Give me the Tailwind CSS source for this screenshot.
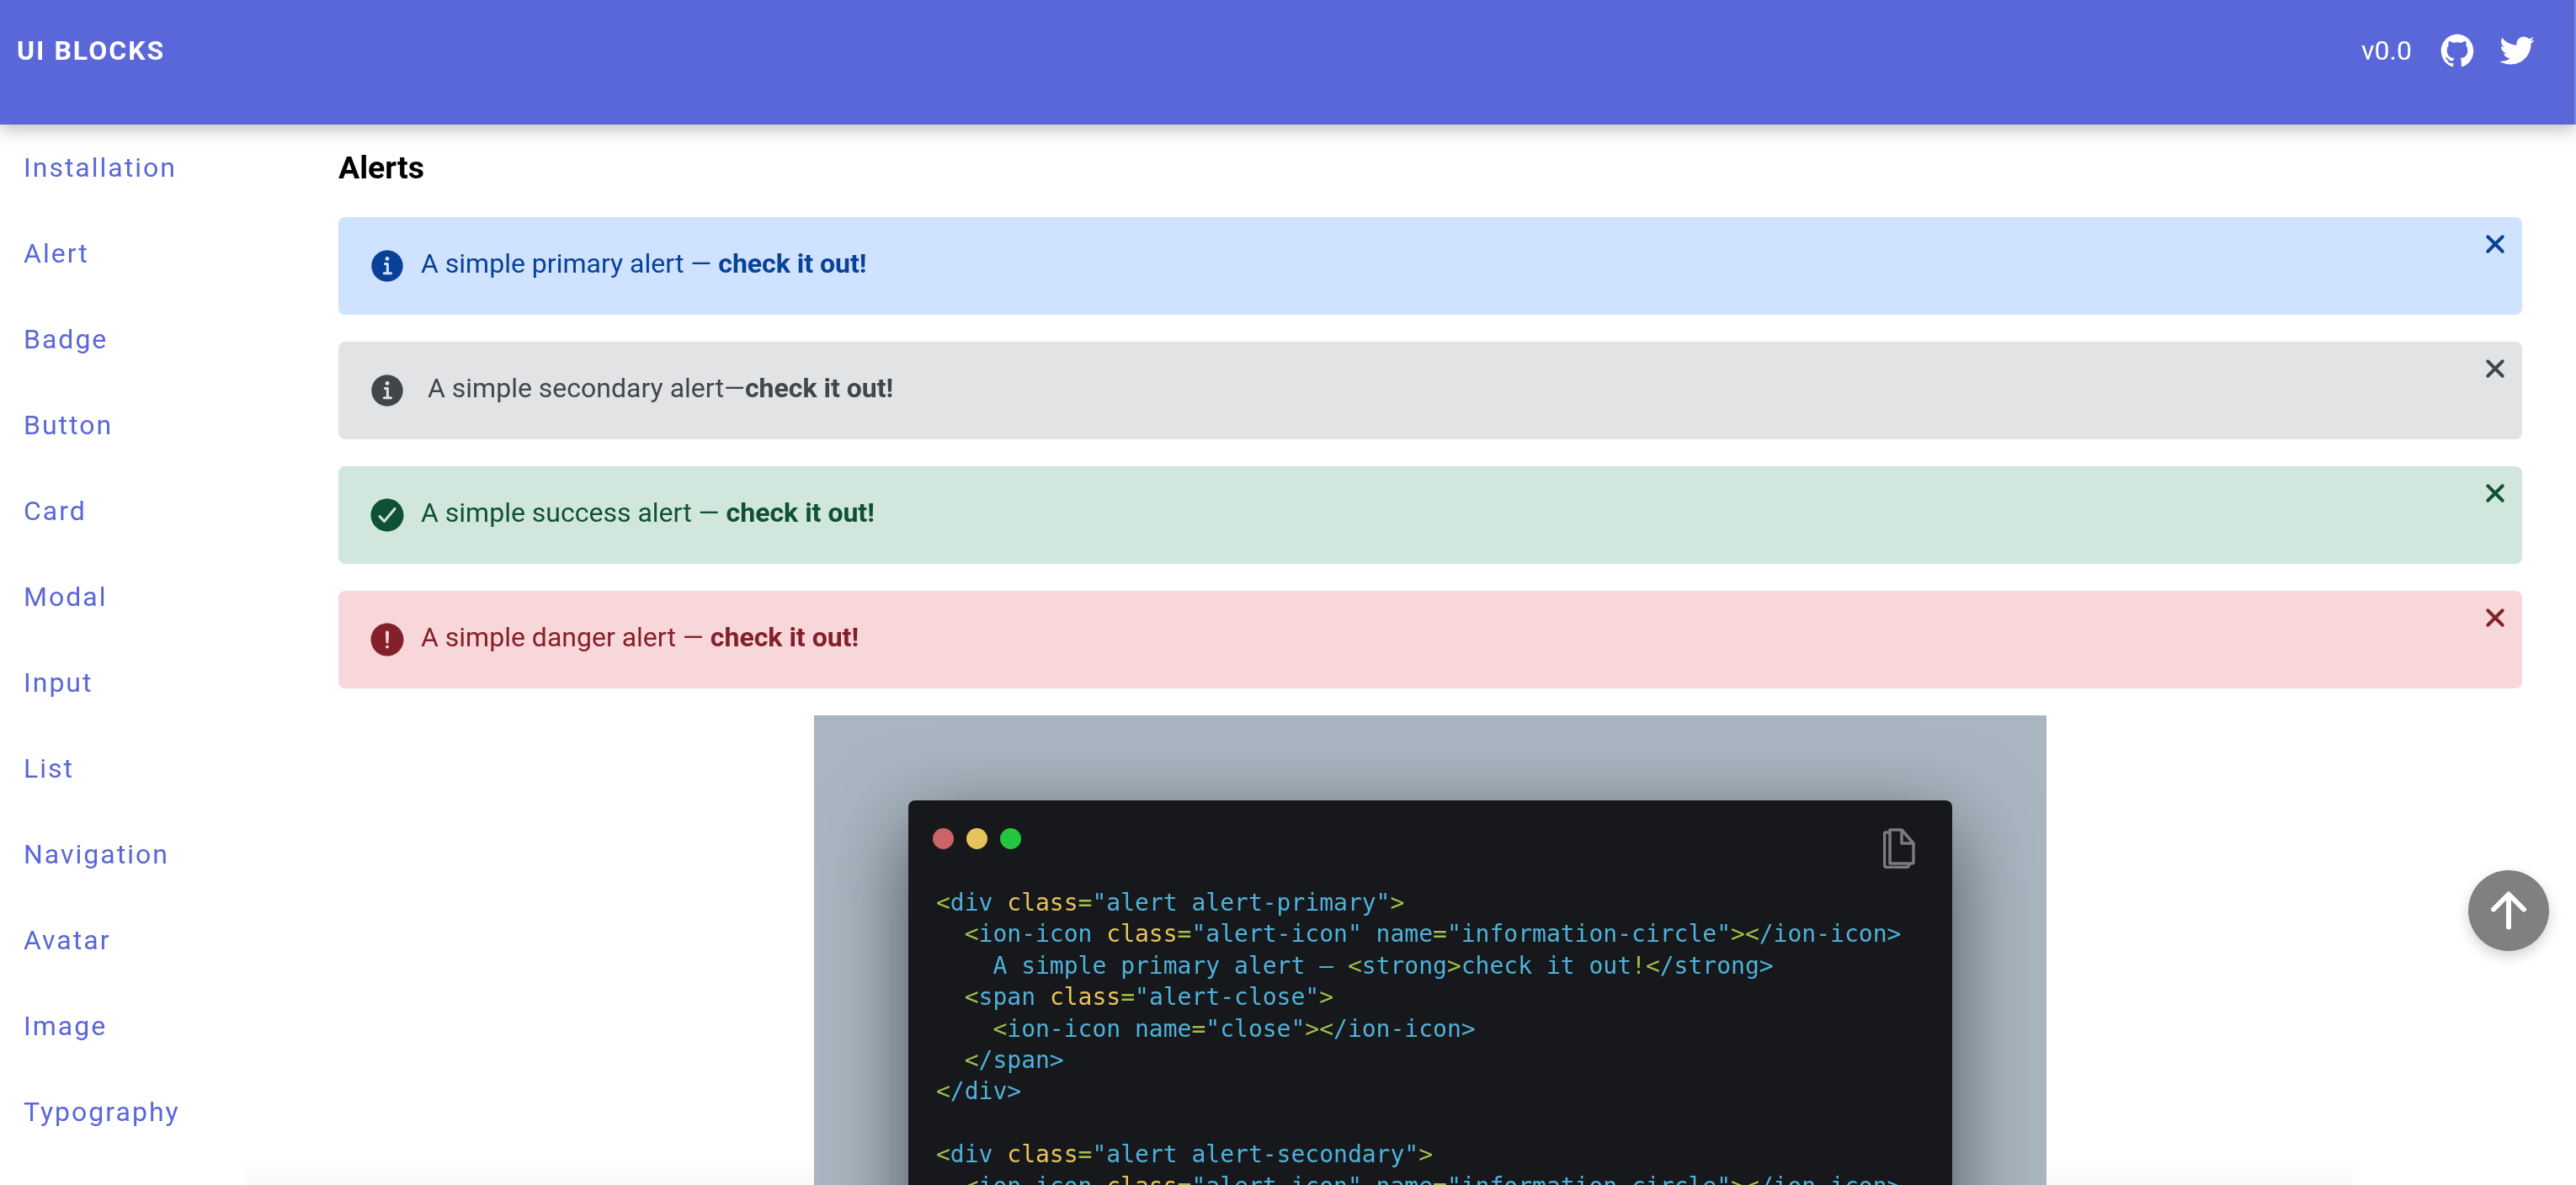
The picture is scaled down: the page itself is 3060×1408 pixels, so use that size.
<!DOCTYPE html>
<html lang="en">
<head>
    <meta charset="UTF-8">
    <meta name="viewport" content="width=device-width, initial-scale=1.0">
    <title>UI Blocks</title>
    <script src="https://cdn.jsdelivr.net/npm/@tailwindcss/browser@4"></script>
</head>
<body class="h-screen overflow-hidden bg-white text-black font-['Roboto',sans-serif]">
    
    <div class="fixed bottom-0 left-[290px] w-[2505px] h-[31px] rounded-t-[300px/31px] bg-gradient-to-b from-[#fefefe] to-[#fafafa]"></div>

    <header class="relative z-10 h-[148px] bg-[#5a67d8] border-r-2 border-[#7c87e0] pl-[20px] pr-[46px] pt-[41px] flex justify-between items-start text-white shadow-[0_5px_20px_rgba(0,0,0,0.27)]">
        <h1 class="text-[32px] leading-[38px] font-bold tracking-[2px]">UI BLOCKS</h1>
        <div class="flex items-center h-[38px]">
            <span class="text-[32px] mr-[32px]">v0.0</span>
            <svg class="w-[44px] h-[44px] mr-[27px]" viewBox="0 0 512 512" fill="currentColor"><path d="M256 32C132.3 32 32 134.9 32 261.7c0 101.5 64.2 187.5 153.2 217.9a17.56 17.56 0 003.8.4c8.3 0 11.5-6.1 11.5-11.4 0-5.5-.2-19.9-.3-39.1a102.4 102.4 0 01-22.6 2.7c-43.1 0-52.9-33.5-52.9-33.5-10.2-26.5-24.9-33.6-24.9-33.6-19.5-13.7-.1-14.1 1.4-14.1h.1c22.5 2 34.3 23.8 34.3 23.8 11.2 19.6 26.2 25.1 39.6 25.1a63 63 0 0025.6-6c2-14.8 7.8-24.9 14.2-30.7-49.7-5.8-102-25.5-102-113.5 0-25.1 8.7-45.6 23-61.6-2.3-5.8-10-29.2 2.2-60.8a18.64 18.64 0 015-.5c8.1 0 26.4 3.1 56.6 24.1a208.21 208.21 0 01112.2 0c30.2-21 48.5-24.1 56.6-24.1a18.64 18.64 0 015 .5c12.2 31.6 4.5 55 2.2 60.8 14.3 16.1 23 36.6 23 61.6 0 88.2-52.4 107.6-102.3 113.3 8 7.1 15.2 21.1 15.2 42.5 0 30.7-.3 55.5-.3 63 0 5.4 3.1 11.5 11.4 11.5a19.35 19.35 0 004-.4C415.9 449.2 480 363.1 480 261.7 480 134.9 379.7 32 256 32z"/></svg>
            <svg class="w-[44px] h-[44px]" viewBox="0 0 512 512" fill="currentColor"><path d="M496 109.5a201.8 201.8 0 01-56.55 15.3 97.51 97.51 0 0043.33-53.6 197.74 197.74 0 01-62.56 23.5A99.14 99.14 0 00348.31 64c-54.42 0-98.46 43.4-98.46 96.9a93.21 93.21 0 002.54 22.1 280.7 280.7 0 01-203-101.3A95.69 95.69 0 0036 130.4c0 33.6 17.53 63.3 44 80.7A97.5 97.5 0 0135.22 199v1.2c0 47 34 86.1 79 95a100.76 100.76 0 01-25.94 3.4 94.38 94.38 0 01-18.51-1.8c12.51 38.5 48.92 66.5 92.05 67.3A199.59 199.59 0 0139.5 405.6a203 203 0 01-23.5-1.4A278.68 278.68 0 00166.74 448c181.36 0 280.44-147.7 280.44-275.8 0-4.2-.11-8.4-.31-12.5A198.48 198.48 0 00496 109.5z"/></svg>
        </div>
    </header>

    <div class="relative flex">
        <!-- sidebar -->
        <nav class="w-[402px] shrink-0 pl-[28px] text-[32px] leading-[102px] tracking-[2px] text-[#5a67d8]">
            <ul>
                <li>Installation</li>
                <li>Alert</li>
                <li>Badge</li>
                <li>Button</li>
                <li>Card</li>
                <li>Modal</li>
                <li>Input</li>
                <li>List</li>
                <li>Navigation</li>
                <li>Avatar</li>
                <li>Image</li>
                <li>Typography</li>
            </ul>
        </nav>

        <main class="w-[2594px] shrink-0">
            <h2 class="text-[37.5px] leading-[48px] font-bold pt-[27px] mb-[35px]">Alerts</h2>

            <div class="flex flex-col gap-[32px]">
                <div class="relative h-[116px] rounded-lg bg-[#cfe2ff] text-[#084298] pl-[34px] flex items-center text-[32px]">
                    <svg class="w-[48px] h-[48px] shrink-0" viewBox="0 0 512 512" fill="currentColor"><path d="M256 56C145.72 56 56 145.72 56 256s89.72 200 200 200 200-89.72 200-200S366.28 56 256 56zm0 82a26 26 0 11-26 26 26 26 0 0126-26zm48 226h-88a16 16 0 010-32h28v-88h-16a16 16 0 010-32h32a16 16 0 0116 16v104h28a16 16 0 010 32z"/></svg>
                    <span class="ml-[16px] mb-[7px]">A simple primary alert — <strong class="font-bold">check it out!</strong></span>
                    <svg class="absolute top-[12px] right-[12px] w-[40px] h-[40px]" viewBox="0 0 512 512" fill="none" stroke="currentColor" stroke-width="50" stroke-linecap="round"><path d="M368 368L144 144M368 144L144 368"/></svg>
                </div>
                <div class="relative h-[116px] rounded-lg bg-[#e2e3e5] text-[#41464b] pl-[34px] flex items-center text-[32px]">
                    <svg class="w-[48px] h-[48px] shrink-0" viewBox="0 0 512 512" fill="currentColor"><path d="M256 56C145.72 56 56 145.72 56 256s89.72 200 200 200 200-89.72 200-200S366.28 56 256 56zm0 82a26 26 0 11-26 26 26 26 0 0126-26zm48 226h-88a16 16 0 010-32h28v-88h-16a16 16 0 010-32h32a16 16 0 0116 16v104h28a16 16 0 010 32z"/></svg>
                    <span class="ml-[24px] mb-[7px]">A simple secondary alert—<strong class="font-bold">check it out!</strong></span>
                    <svg class="absolute top-[12px] right-[12px] w-[40px] h-[40px]" viewBox="0 0 512 512" fill="none" stroke="currentColor" stroke-width="50" stroke-linecap="round"><path d="M368 368L144 144M368 144L144 368"/></svg>
                </div>
                <div class="relative h-[116px] rounded-lg bg-[#d1e7dd] text-[#0f5132] pl-[34px] flex items-center text-[32px]">
                    <svg class="w-[48px] h-[48px] shrink-0" viewBox="0 0 512 512" fill="currentColor"><path d="M256 48C141.31 48 48 141.31 48 256s93.31 208 208 208 208-93.31 208-208S370.69 48 256 48zm108.25 138.29l-134.4 160a16 16 0 01-12 5.71h-.27a16 16 0 01-11.89-5.3l-57.6-64a16 16 0 1123.78-21.4l45.29 50.32 122.59-145.91a16 16 0 0124.5 20.58z"/></svg>
                    <span class="ml-[16px] mb-[7px]">A simple success alert — <strong class="font-bold">check it out!</strong></span>
                    <svg class="absolute top-[12px] right-[12px] w-[40px] h-[40px]" viewBox="0 0 512 512" fill="none" stroke="currentColor" stroke-width="50" stroke-linecap="round"><path d="M368 368L144 144M368 144L144 368"/></svg>
                </div>
                <div class="relative h-[116px] rounded-lg bg-[#f8d7da] text-[#842029] pl-[34px] flex items-center text-[32px]">
                    <svg class="w-[48px] h-[48px] shrink-0" viewBox="0 0 512 512" fill="currentColor"><path d="M256 48C141.31 48 48 141.31 48 256s93.31 208 208 208 208-93.31 208-208S370.69 48 256 48zm0 319.91a20 20 0 1120-20 20 20 0 01-20 20zm21.72-201.15l-5.74 122a16 16 0 01-32 0l-5.74-121.94v-.05a21.74 21.74 0 1143.44 0z"/></svg>
                    <span class="ml-[16px] mb-[7px]">A simple danger alert — <strong class="font-bold">check it out!</strong></span>
                    <svg class="absolute top-[12px] right-[12px] w-[40px] h-[40px]" viewBox="0 0 512 512" fill="none" stroke="currentColor" stroke-width="50" stroke-linecap="round"><path d="M368 368L144 144M368 144L144 368"/></svg>
                </div>
            </div>

            <!-- code snippet picture -->
            <div class="w-[1464px] ml-[565px] mt-[32px] h-[900px] overflow-hidden bg-[#a9b6c1] pt-[101px] pl-[112px]">
                <div class="relative w-[1240px] h-[800px] rounded-lg bg-[#16181b] pt-[33px] pl-[33px] shadow-[0_30px_100px_rgba(0,0,0,0.55)]">
                    <div class="flex gap-[15px] -ml-[4px]">
                        <span class="w-[25px] h-[25px] rounded-full bg-[#cb6368]"></span>
                        <span class="w-[25px] h-[25px] rounded-full bg-[#e6c35c]"></span>
                        <span class="w-[25px] h-[25px] rounded-full bg-[#25c63f]"></span>
                    </div>
                    <svg class="absolute top-[33px] right-[44px] w-[38px] h-[48px]" viewBox="0 0 38 48" fill="none" stroke="#7b7b7b" stroke-width="3.500" stroke-linejoin="round"><path d="M8 2h14l14 16v22a2 2 0 01-2 2H8z"/><path d="M22 2v16h14"/><path d="M8 5H3a1.500 1.500 0 00-1.500 1.500V44a2.500 2.500 0 002.500 2.500h24a2.500 2.500 0 002.500-2.500v-2"/></svg>
                    <pre class="mt-[45px] font-['DejaVu_Sans_Mono',monospace] text-[28px] leading-[37.4px] text-[#4fb1d9]"><span class="text-[#a3be4c]">&lt;</span>div <span class="text-[#e6c35c]">class</span><span class="text-[#a3be4c]">=</span>"alert alert-primary"<span class="text-[#a3be4c]">&gt;</span>
  <span class="text-[#a3be4c]">&lt;</span>ion-icon <span class="text-[#e6c35c]">class</span><span class="text-[#a3be4c]">=</span>"alert-icon" name<span class="text-[#a3be4c]">=</span>"information-circle"<span class="text-[#a3be4c]">&gt;&lt;</span>/ion-icon&gt;
    A simple primary alert — <span class="text-[#a3be4c]">&lt;</span>strong<span class="text-[#a3be4c]">&gt;</span>check it out<span class="text-[#a3be4c]">!&lt;</span>/strong&gt;
  <span class="text-[#a3be4c]">&lt;</span>span <span class="text-[#e6c35c]">class</span><span class="text-[#a3be4c]">=</span>"alert-close"<span class="text-[#a3be4c]">&gt;</span>
    <span class="text-[#a3be4c]">&lt;</span>ion-icon name<span class="text-[#a3be4c]">=</span>"close"<span class="text-[#a3be4c]">&gt;&lt;</span>/ion-icon&gt;
  <span class="text-[#a3be4c]">&lt;</span>/span&gt;
<span class="text-[#a3be4c]">&lt;</span>/div&gt;

<span class="text-[#a3be4c]">&lt;</span>div <span class="text-[#e6c35c]">class</span><span class="text-[#a3be4c]">=</span>"alert alert-secondary"<span class="text-[#a3be4c]">&gt;</span>
  <span class="text-[#a3be4c]">&lt;</span>ion-icon <span class="text-[#e6c35c]">class</span><span class="text-[#a3be4c]">=</span>"alert-icon" name<span class="text-[#a3be4c]">=</span>"information-circle"<span class="text-[#a3be4c]">&gt;&lt;</span>/ion-icon&gt;</pre>
                </div>
            </div>
        </main>
    </div>

    <!-- scroll to top -->
    <button class="fixed left-[2932px] top-[1034px] z-20 w-[96px] h-[96px] rounded-full bg-[#7e817e] flex items-center justify-center shadow-[0_6px_16px_rgba(0,0,0,0.18)]">
        <svg class="w-[64px] h-[64px] text-white" viewBox="0 0 512 512" fill="none" stroke="currentColor" stroke-width="48" stroke-linecap="round" stroke-linejoin="round"><path d="M112 244l144-144 144 144M256 120v292"/></svg>
    </button>
</body>
</html>
